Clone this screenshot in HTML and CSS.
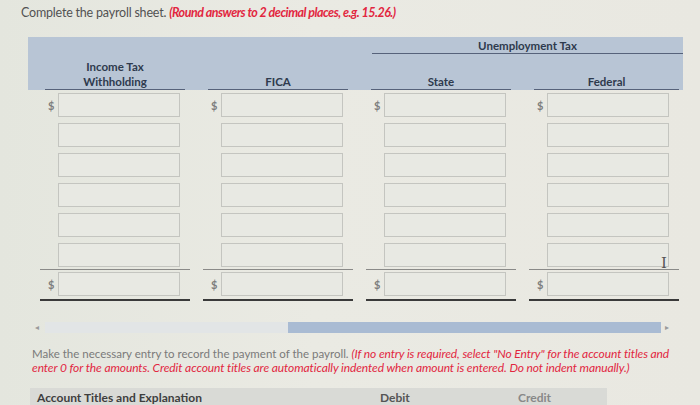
FILE: index.html
```html
<!DOCTYPE html>
<html>
<head>
<meta charset="utf-8">
<link rel="stylesheet" href="styles.css">
</head>
<body>
<p class="title">Complete the payroll sheet. <em>(Round answers to 2 decimal places, e.g. 15.26.)</em></p>

<div class="band">
  <div class="group">Unemployment Tax</div>
  <div class="label c1">Income Tax<br>Withholding</div>
  <div class="label c2">FICA</div>
  <div class="label c3">State</div>
  <div class="label c4">Federal</div>
</div>

<div class="sheet">
  <div class="col">
    <div class="row"><span class="sign">$</span><span class="box"></span></div>
    <div class="row"><span class="sign"></span><span class="box"></span></div>
    <div class="row"><span class="sign"></span><span class="box"></span></div>
    <div class="row"><span class="sign"></span><span class="box"></span></div>
    <div class="row"><span class="sign"></span><span class="box"></span></div>
    <div class="row"><span class="sign"></span><span class="box"></span></div>
    <div class="thin"></div>
    <div class="row total"><span class="sign">$</span><span class="box"></span></div>
    <div class="thick"></div>
  </div>
  <div class="col">
    <div class="row"><span class="sign">$</span><span class="box"></span></div>
    <div class="row"><span class="sign"></span><span class="box"></span></div>
    <div class="row"><span class="sign"></span><span class="box"></span></div>
    <div class="row"><span class="sign"></span><span class="box"></span></div>
    <div class="row"><span class="sign"></span><span class="box"></span></div>
    <div class="row"><span class="sign"></span><span class="box"></span></div>
    <div class="thin"></div>
    <div class="row total"><span class="sign">$</span><span class="box"></span></div>
    <div class="thick"></div>
  </div>
  <div class="col">
    <div class="row"><span class="sign">$</span><span class="box"></span></div>
    <div class="row"><span class="sign"></span><span class="box"></span></div>
    <div class="row"><span class="sign"></span><span class="box"></span></div>
    <div class="row"><span class="sign"></span><span class="box"></span></div>
    <div class="row"><span class="sign"></span><span class="box"></span></div>
    <div class="row"><span class="sign"></span><span class="box"></span></div>
    <div class="thin"></div>
    <div class="row total"><span class="sign">$</span><span class="box"></span></div>
    <div class="thick"></div>
  </div>
  <div class="col">
    <div class="row"><span class="sign">$</span><span class="box"></span></div>
    <div class="row"><span class="sign"></span><span class="box"></span></div>
    <div class="row"><span class="sign"></span><span class="box"></span></div>
    <div class="row"><span class="sign"></span><span class="box"></span></div>
    <div class="row"><span class="sign"></span><span class="box"></span></div>
    <div class="row"><span class="sign"></span><span class="box cursor-box"><span class="ibeam">I</span></span></div>
    <div class="thin"></div>
    <div class="row total"><span class="sign">$</span><span class="box"></span></div>
    <div class="thick"></div>
  </div>
</div>

<div class="scroll">
  <span class="arrow">&#9666;</span>
  <div class="track"><div class="thumb"></div></div>
  <span class="arrow right">&#9656;</span>
</div>

<p class="instr">Make the necessary entry to record the payment of the payroll. <em>(If no entry is required, select "No Entry" for the account titles and<br>enter 0 for the amounts. Credit account titles are automatically indented when amount is entered. Do not indent manually.)</em></p>

<div class="jhead">
  <span class="jt">Account Titles and Explanation</span>
  <span class="jd">Debit</span>
  <span class="jc">Credit</span>
</div>
</body>
</html>
```

FILE: styles.css
```css
html, body {
  margin: 0;
  padding: 0;
}
body {
  width: 700px;
  height: 405px;
  overflow: hidden;
  font-family: Lato, "Open Sans", sans-serif;
  background: linear-gradient(90deg, #e4e6de 0%, #eaeae3 45%, #e9e8e1 100%);
}
.title {
  margin: 0;
  padding: 6px 0 0 21px;
  font-size: 12.5px;
  line-height: 14px;
  color: #525252;
  letter-spacing: -0.2px;
}
.title em {
  color: #e2263f;
  font-weight: 700;
  letter-spacing: -0.5px;
}
.band {
  margin: 17px 0 0 28px;
  width: 643px;
  padding-left: 12px;
  height: 53px;
  background: #b8c5d5;
  display: grid;
  grid-template-columns: repeat(4, 150px);
  column-gap: 13px;
  grid-template-rows: 17px 36px;
  color: #2e3a4d;
  font-weight: 700;
  font-size: 11.5px;
}
.group {
  grid-column: 3 / 5;
  grid-row: 1;
  margin: 0 -4px 0 6px;
  padding-top: 2px;
  line-height: 14px;
  text-align: center;
  border-bottom: 1px solid #56627a;
}
.label {
  grid-row: 2;
  align-self: end;
  margin: 0 5px;
  line-height: 15px;
  text-align: center;
  border-bottom: 1px solid #56627a;
}
.c1 { grid-column: 1; }
.c2 { grid-column: 2; }
.c3 { grid-column: 3; }
.c4 { grid-column: 4; margin-right: 0; }
.sheet {
  margin: 3px 0 0 40px;
  display: grid;
  grid-template-columns: repeat(4, 150px);
  column-gap: 13px;
}
.col {
  display: flex;
  flex-direction: column;
}
.row {
  display: flex;
  align-items: center;
  height: 24px;
  margin-bottom: 6px;
}
.row:nth-child(6) { margin-bottom: 0; }
.sign {
  width: 10px;
  padding-left: 8px;
  font-size: 11px;
  font-weight: 700;
  color: #7d7d7d;
}
.box {
  width: 122px;
  height: 24px;
  box-sizing: border-box;
  border: 1px solid #c4c5c0;
  background: #e8e9e3;
  position: relative;
}
.thin {
  height: 1px;
  background: #8a8a88;
  margin-top: 2px;
}
.row.total {
  margin: 2px 0 0 0;
}
.thick {
  height: 2px;
  background: #3a3a3a;
  margin-top: 3px;
}
.ibeam {
  position: absolute;
  right: 1px;
  top: 11px;
  font-size: 15px;
  line-height: 16px;
  color: #555;
  font-family: "DejaVu Serif", serif;
}
.scroll {
  margin: 21px 0 0 35px;
  display: flex;
  align-items: center;
  height: 11px;
}
.arrow {
  width: 10px;
  font-size: 8px;
  line-height: 11px;
  color: #9a9a9a;
}
.arrow.right {
  margin-left: 4px;
}
.track {
  width: 616px;
  height: 11px;
  background: #e2e5e6;
}
.thumb {
  margin-left: 243px;
  width: 373px;
  height: 11px;
  background: #a9bbd3;
}
.instr {
  margin: 14px 0 0 32px;
  font-size: 11.5px;
  line-height: 14px;
  color: #7a7a7a;
}
.instr em {
  color: #e2263f;
  font-size: 12px;
  letter-spacing: -0.1px;
}
.jhead {
  margin: 13px 0 0 30px;
  width: 577px;
  height: 30px;
  background: #d9dad6;
  display: flex;
  font-size: 12px;
  font-weight: 700;
  color: #3e3e3e;
  line-height: 14px;
  padding-top: 3px;
}
.jt {
  padding-left: 7px;
  width: 343px;
}
.jd {
  width: 138px;
  color: #555;
}
.jc {
  color: #888;
}
```
